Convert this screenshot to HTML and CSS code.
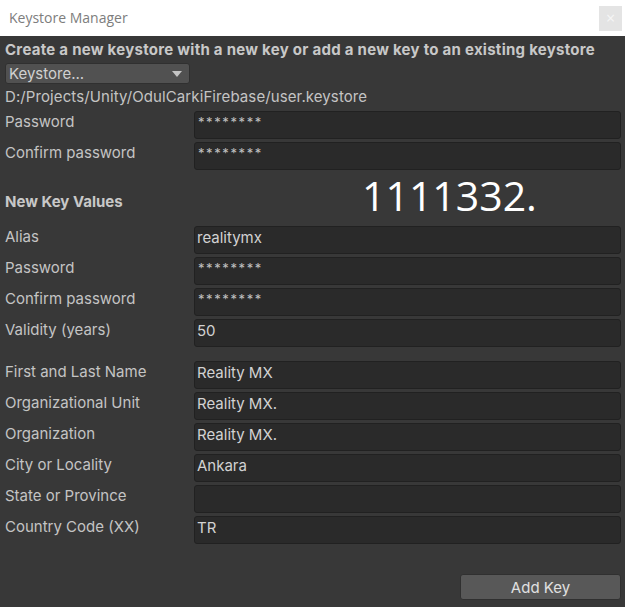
FILE: index.html
```html
<!DOCTYPE html>
<html>
<head>
<meta charset="utf-8">
<link rel="stylesheet" href="styles.css">
</head>
<body>
<div class="window">
  <div class="titlebar">
    <span class="title">Keystore Manager</span>
    <span class="close">×</span>
  </div>
  <div class="panel">
    <div class="heading">Create a new keystore with a new key or add a new key to an existing keystore</div>
    <div class="dropdown">
      <span>Keystore...</span>
      <svg class="arrow" width="10" height="6" viewBox="0 0 10 6"><path d="M0 0 L10 0 L5 6 Z" fill="#c4c4c4"/></svg>
    </div>
    <div class="path">D:/Projects/Unity/OdulCarkiFirebase/user.keystore</div>
    <div class="rows">
      <div class="row"><span class="label">Password</span><div class="field pw">********</div></div>
      <div class="row"><span class="label">Confirm password</span><div class="field pw">********</div></div>
    </div>
    <div class="section">
      <span class="section-title">New Key Values</span>
      <span class="bignum">1111332.</span>
    </div>
    <div class="rows">
      <div class="row"><span class="label">Alias</span><div class="field">realitymx</div></div>
      <div class="row"><span class="label">Password</span><div class="field pw">********</div></div>
      <div class="row"><span class="label">Confirm password</span><div class="field pw">********</div></div>
      <div class="row"><span class="label">Validity (years)</span><div class="field">50</div></div>
    </div>
    <div class="rows gap-top">
      <div class="row"><span class="label">First and Last Name</span><div class="field">Reality MX</div></div>
      <div class="row"><span class="label">Organizational Unit</span><div class="field">Reality MX.</div></div>
      <div class="row"><span class="label">Organization</span><div class="field">Reality MX.</div></div>
      <div class="row"><span class="label">City or Locality</span><div class="field">Ankara</div></div>
      <div class="row"><span class="label">State or Province</span><div class="field"></div></div>
      <div class="row"><span class="label">Country Code (XX)</span><div class="field">TR</div></div>
    </div>
    <div class="actions">
      <button class="btn">Add Key</button>
    </div>
  </div>
</div>
</body>
</html>
```
FILE: styles.css
```css
* { box-sizing: border-box; }
html, body { margin: 0; padding: 0; }
body {
  width: 625px;
  height: 607px;
  background: #383838;
  font-family: Inter, "Noto Sans", sans-serif;
  overflow: hidden;
}
.window { display: flex; flex-direction: column; height: 607px; }
.titlebar {
  height: 36px;
  background: #ffffff;
  display: flex;
  align-items: center;
  padding-left: 9px;
}
.title {
  font-family: "Open Sans", sans-serif;
  font-size: 14px;
  color: #7d7d7d;
  margin-top: -1px;
}
.close {
  margin-left: auto;
  margin-right: 3px;
  width: 23px;
  height: 25px;
  background: #e4e4e4;
  color: #f6f6f6;
  font-size: 16px;
  line-height: 25px;
  text-align: center;
  font-family: "Open Sans", sans-serif;
}
.panel {
  flex: 1;
  padding: 2px 4px 0 5px;
  display: flex;
  flex-direction: column;
  color: #c4c4c4;
  font-size: 15px;
}
.heading {
  height: 24px;
  line-height: 24px;
  font-weight: 700;
  font-size: 15px;
  letter-spacing: 0.27px;
  color: #c8c8c8;
  white-space: nowrap;
}
.dropdown {
  margin-top: 1px;
  width: 185px;
  height: 21px;
  background: #515151;
  border: 1px solid #303030;
  border-radius: 3px;
  display: flex;
  align-items: center;
  padding: 0 7px 0 3px;
  color: #d0d0d0;
}
.dropdown .arrow { margin-left: auto; }
.path {
  height: 26px;
  line-height: 26px;
  letter-spacing: 0.1px;
  color: #c4c4c4;
}
.rows {
  display: flex;
  flex-direction: column;
  gap: 3px;
  margin-top: 1px;
}
.rows.gap-top { margin-top: 14px; }
.row {
  display: flex;
  height: 28px;
}
.label {
  width: 189px;
  line-height: 22px;
  white-space: nowrap;
}
.field {
  flex: 1;
  height: 28px;
  background: #2a2a2a;
  border: 1px solid #212121;
  border-radius: 3px;
  padding: 0 0 0 2px;
  line-height: 22px;
  color: #d2d2d2;
}
.field.pw {
  font-size: 13px;
  line-height: 21px;
  letter-spacing: 1.6px;
  padding-left: 3px;
  color: #c0c0c0;
}
.section {
  height: 55px;
  display: flex;
  align-items: center;
  position: relative;
}
.section-title {
  font-weight: 700;
  margin-top: 8px;
  color: #c8c8c8;
}
.bignum {
  position: absolute;
  left: 357px;
  top: 0;
  font-family: "Open Sans", sans-serif;
  font-size: 41px;
  line-height: 50px;
  color: #ffffff;
}
.actions {
  display: flex;
  justify-content: flex-end;
  margin-top: 30px;
}
.btn {
  width: 161px;
  height: 26px;
  background: #585858;
  border: 1px solid #303030;
  border-radius: 3px;
  color: #e0e0e0;
  font-family: Inter, "Noto Sans", sans-serif;
  font-size: 15px;
  padding: 0;
}
```
